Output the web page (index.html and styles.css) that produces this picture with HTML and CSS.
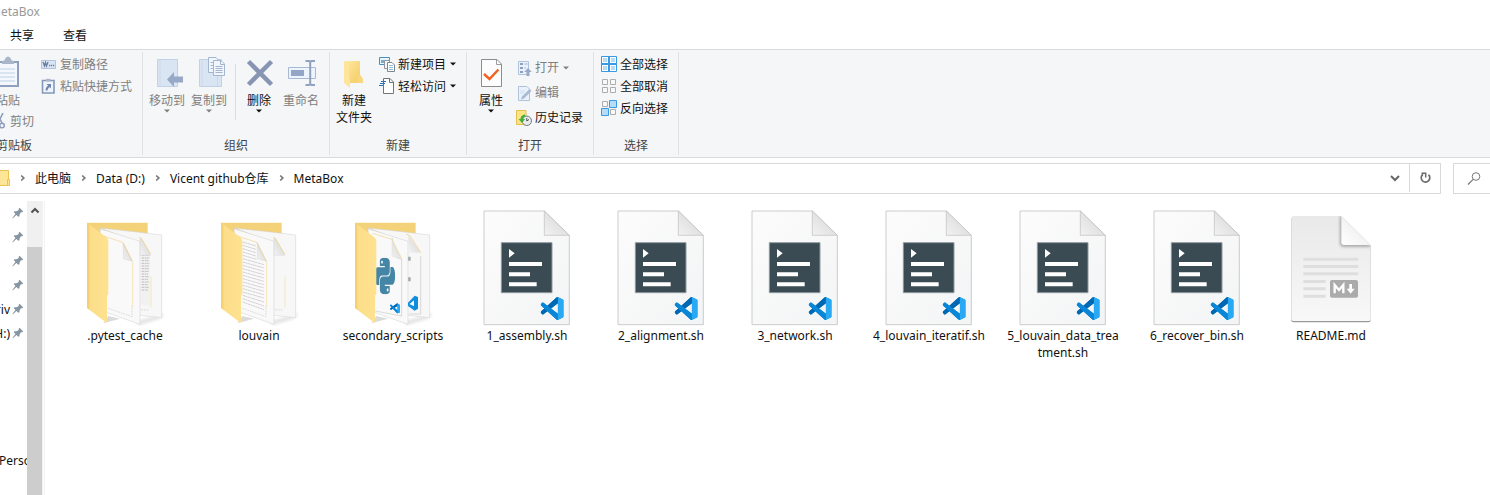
FILE: index.html
```html
<!DOCTYPE html>
<html lang="zh-CN">
<head>
<meta charset="utf-8">
<title>MetaBox</title>
<link rel="stylesheet" href="styles.css">
</head>
<body>
<svg class="defs" aria-hidden="true">
  <defs>
    <linearGradient id="cover" x1="0" y1="0" x2="1" y2="0"><stop offset="0" stop-color="#f8d577"/><stop offset=".12" stop-color="#fbdd8a"/><stop offset="1" stop-color="#ffe28f"/></linearGradient>
    <linearGradient id="paper" x1="0" y1="0" x2="1" y2="1"><stop offset="0" stop-color="#fcfcfc"/><stop offset="1" stop-color="#f3f4f5"/></linearGradient>
    <linearGradient id="curl" x1="0" y1="1" x2="1" y2="0"><stop offset="0" stop-color="#f2f2f2"/><stop offset="1" stop-color="#d2d2d2"/></linearGradient>
    <linearGradient id="mdpaper" x1="0" y1="0" x2="0" y2="1"><stop offset="0" stop-color="#e9e9e9"/><stop offset="1" stop-color="#f8f8f8"/></linearGradient>
    <linearGradient id="mdcurl" x1="0" y1="1" x2="1" y2="0"><stop offset="0" stop-color="#ffffff"/><stop offset=".45" stop-color="#f4f4f4"/><stop offset="1" stop-color="#cccccc"/></linearGradient>
    <linearGradient id="yellow" x1="0" y1="0" x2="1" y2="1"><stop offset="0" stop-color="#ffe9a2"/><stop offset="1" stop-color="#f4cb62"/></linearGradient>
    <filter id="soft" x="-30%" y="-30%" width="160%" height="160%"><feGaussianBlur stdDeviation="5"/></filter>
    <filter id="edge" x="-10%" y="-10%" width="120%" height="120%"><feGaussianBlur stdDeviation="2"/></filter>
    <clipPath id="mdclip"><path d="M70 48H214L302 135V358Q302 363 296 363H70Q64 363 64 357V54Q64 48 70 48Z"/></clipPath>
  </defs>
  <symbol id="vscode" viewBox="0 0 24 24">
    <path fill="#0a86d6" d="M23.15 2.587L18.21.21a1.494 1.494 0 0 0-1.705.29l-9.46 8.63-4.12-3.128a.999.999 0 0 0-1.276.057L.327 7.261A1 1 0 0 0 .326 8.74L3.899 12 .326 15.26a1 1 0 0 0 .001 1.479L1.65 17.94a.999.999 0 0 0 1.276.057l4.12-3.128 9.46 8.63a1.492 1.492 0 0 0 1.704.29l4.942-2.377A1.5 1.5 0 0 0 24 20.06V3.939a1.5 1.5 0 0 0-.85-1.352zm-5.146 14.861L10.826 12l7.178-5.448v10.896z"/>
    <path fill="#0068b2" d="M16.5.5L.33 15.26a1 1 0 0 0 0 1.48l1.32 1.2a1 1 0 0 0 1.28.06L18 6.55V.2Q17.200 0 16.5.5z"/>
    <path fill="#0a86d6" d="M1.65 6.060L.33 7.260a1 1 0 0 0 0 1.480L16.500 23.500Q17.200 24 18 23.800V17.450L2.930 6Q2.200 5.600 1.650 6.060z"/>
    <path fill="#29a9f3" d="M18 .2Q18.100.15 18.210.21L23.150 2.587A1.500 1.500 0 0 1 24 3.939V20.060A1.500 1.500 0 0 1 23.150 21.410L18.210 23.790 18 23.800z"/>
  </symbol>
  <symbol id="python" viewBox="0 0 24 24" preserveAspectRatio="none">
    <path fill="#4585a5" d="M14.25.18l.9.2.73.26.59.3.45.32.34.34.25.34.16.33.1.3.04.26.02.2-.01.13V8.5l-.05.63-.13.55-.21.46-.26.38-.3.31-.33.25-.35.19-.35.14-.33.1-.3.07-.26.04-.21.02H8.77l-.69.05-.59.14-.5.22-.41.27-.33.32-.27.35-.2.36-.15.37-.1.35-.07.32-.04.27-.02.21v3.06H3.17l-.21-.03-.28-.07-.32-.12-.35-.18-.36-.26-.36-.36-.35-.46-.32-.59-.28-.73-.21-.88-.14-1.05-.05-1.23.06-1.22.16-1.04.24-.87.32-.71.36-.57.4-.44.42-.33.42-.24.4-.16.36-.1.32-.05.24-.01h.16l.06.01h8.16v-.83H6.18l-.01-2.75-.02-.37.05-.34.11-.31.17-.28.25-.26.31-.23.38-.2.44-.18.51-.15.58-.12.64-.1.71-.06.77-.04.84-.02 1.27.05zm-6.3 1.98l-.23.33-.08.41.08.41.23.34.33.22.41.09.41-.09.33-.22.23-.34.08-.41-.08-.41-.23-.33-.33-.22-.41-.09-.41.09zm13.09 3.95l.28.06.32.12.35.18.36.27.36.35.35.47.32.59.28.73.21.88.14 1.04.05 1.23-.06 1.23-.16 1.04-.24.86-.32.71-.36.57-.4.45-.42.33-.42.24-.4.16-.36.09-.32.05-.24.02-.16-.01h-8.22v.82h5.84l.01 2.76.02.36-.05.34-.11.31-.17.29-.25.25-.31.24-.38.2-.44.17-.51.15-.58.13-.64.09-.71.07-.77.04-.84.01-1.27-.04-1.07-.14-.9-.2-.73-.25-.59-.3-.45-.33-.34-.34-.25-.34-.16-.33-.1-.3-.04-.25-.02-.2.01-.13v-5.34l.05-.64.13-.54.21-.46.26-.38.3-.32.33-.24.35-.2.35-.14.33-.1.3-.06.26-.04.21-.02.13-.01h5.84l.69-.05.59-.14.5-.21.41-.28.33-.32.27-.35.2-.36.15-.36.1-.35.07-.32.04-.28.02-.21V6.07h2.09l.14.01zm-6.470 14.250l-.23.33-.08.41.08.41.23.33.33.23.41.08.41-.08.33-.23.23-.33.08-.41-.08-.41-.23-.33-.33-.23-.41-.08-.41.08z"/>
  </symbol>
  <symbol id="folder-back" viewBox="45 45 240 315">
    <path d="M200 345L285 322 270 338 205 358Z" fill="#d8d8d8" filter="url(#soft)" opacity=".7"/>
    <path d="M100 352L150 338 115 330Z" fill="#ccc" filter="url(#edge)" opacity=".7"/>
    <path d="M51 50H233V200H51Z" fill="#f3d27a"/>
    <path d="M90 66L200 78 275 87V335L180 325V100Z" fill="#f7f7f7" stroke="#d0d0d0" stroke-width="1.500"/>
  </symbol>
  <symbol id="folder-page" viewBox="45 45 240 315">
    <path d="M90 68L210 106V355L106 318Z" fill="#f9f9f9" stroke="#cfcfcf" stroke-width="1.500"/>
  </symbol>
  <symbol id="folder-cover" viewBox="45 45 240 315">
    <path d="M51 50L109 94Q115 99 115 106V264L111 270V347Q110 352 106 348L51 306Z" fill="url(#cover)"/>
    <path d="M51 50L58 56V311L51 306Z" fill="#f2cb69" opacity=".6"/>
  </symbol>
  <symbol id="folder-curls" viewBox="45 45 240 315">
    <path d="M210 95L214 97 243 148H210Z" fill="url(#curl)" stroke="#cdcdcd"/>
    <path d="M208 95L215 99 242 144" fill="none" stroke="#f1d68e" stroke-width="2.500"/>
    <path d="M160 110L188 166 160 158Z" fill="url(#curl)" stroke="#c9c9c9"/>
    <path d="M104 91L158 109 186 166" fill="none" stroke="#efd38a" stroke-width="2"/>
    <path d="M188 168V302M243 212V304" stroke="#f6e5bd" stroke-width="3"/>
    <path d="M115 307L186 332V300M214 311L238 312" fill="none" stroke="#a8a8a8" stroke-width="1.200" stroke-dasharray="5 3"/>
  </symbol>
  <symbol id="script" viewBox="40 30 264 348">
    <path d="M43 33H224L299 106V374H43Z" fill="url(#paper)" stroke="#c3c3c3" stroke-width="2.500"/>
    <path d="M224 33L299 106H224Z" fill="url(#curl)" stroke="#bdbdbd" stroke-width="2"/>
    <path d="M95 128H247V278H95Z" fill="#3a4b53" stroke="#8f999e" stroke-width="3"/>
    <path d="M118 147L135 160 118 173ZM118 186H217V198H118ZM118 217H181V229H118ZM118 247H201V259H118Z" fill="#fff"/>
    <use href="#vscode" x="213" y="291" width="69" height="69"/>
  </symbol>
  <symbol id="pin" viewBox="0 0 12 12"><path fill="#8694a3" d="M7.500.8L11.300 4.600 10 5.300 9.500 5 7.600 6.900 7.500 9.300 6.400 9.700 4.400 7.900 1 11.200.5 10.800 3.500 7.100 1.800 5.200 2.400 4.200 5 4.200 6.900 2.400 6.700 1.800Z"/></symbol>
  <symbol id="caret" viewBox="0 0 6 4"><path fill="currentColor" d="M0 .5H6L3 3.500Z"/></symbol>
  <symbol id="crumb" viewBox="0 0 8 8"><path fill="none" stroke="#777" stroke-width="1.700" d="M2.200 1.500L4.800 4 2.200 6.500"/></symbol>
</svg>

<div class="window">
  <header class="titlebar">MetaBox</header>
  <nav class="tabs">
    <button class="tab">共享</button>
    <button class="tab">查看</button>
  </nav>

  <div class="ribbon">
    <section class="group group-clipboard">
      <div class="group-body">
        <div class="stack">
          <button class="big muted">
            <svg class="icon-lg" viewBox="0 0 32 32"><path d="M3 5H27V31H3Z" fill="#8da0bf"/><path d="M6 7H25V29H6Z" fill="#f4f8fd"/><path d="M10 5Q13 5 13.500 2Q16 -1 18.500 2Q19 5 22 5V8H10Z" fill="#a9b6ca"/><path d="M8 13H23M8 17H23M8 21H23M8 25H23" stroke="#bfd1e6"/></svg>
            <span>粘贴</span>
          </button>
          <button class="small muted cut">
            <svg class="icon-sm" viewBox="0 0 16 16"><path d="M6 0L11 10M12 0L7 10" stroke="#8d9dbb" stroke-width="1.600"/><circle cx="5.500" cy="12.500" r="2.300" fill="none" stroke="#8d9dbb" stroke-width="1.500"/><circle cx="11" cy="12.500" r="2.300" fill="none" stroke="#8d9dbb" stroke-width="1.500"/></svg>
            <span>剪切</span>
          </button>
        </div>
        <div class="list">
          <button class="small muted">
            <svg class="icon-sm" viewBox="0 0 16 16"><path d="M.5 4.500H14.500V12.500H.5Z" fill="#d9e5f4" stroke="#b3c3db"/><path d="M2 6L3.500 10 4.500 6.500 5.500 10 7 6" fill="none" stroke="#6a7c9f" stroke-width="1.300"/><path d="M8 9.500H9.200M10 9.500H11.200M12 9.500H13.200" stroke="#6a7c9f" stroke-width="1.300"/></svg>
            <span>复制路径</span>
          </button>
          <button class="small muted">
            <svg class="icon-sm" viewBox="0 0 16 16"><path d="M1.500 2.500H13V15H1.500Z" fill="#eef4fb" stroke="#8598b9" stroke-width="1.600"/><path d="M5 .8H9.500V3.500H5Z" fill="#a9b6ca"/><path d="M5.500 6H10V10.500L8.500 9Q6.500 10.500 6.500 12.500H4.500Q4.500 9.500 7 7.500Z" fill="#7288ae"/></svg>
            <span>粘贴快捷方式</span>
          </button>
        </div>
      </div>
      <div class="group-label">剪贴板</div>
    </section>

    <section class="group group-organize">
      <div class="group-body">
        <button class="big muted">
          <svg class="icon-lg" viewBox="0 0 32 32"><path d="M6.500 3.500H26.500V30.500H6.500Z" fill="#dae5f4" stroke="#c3d1e6"/><path d="M9 4V30" stroke="#cbd8ea"/><path d="M16 23.500L23 16V20.500H32V26.500H23V31Z" fill="#98a9c8"/></svg>
          <span>移动到</span><svg class="caret"><use href="#caret"/></svg>
        </button>
        <button class="big muted">
          <svg class="icon-lg" viewBox="0 0 32 32"><path d="M6.500 3.500H28.500V30.500H6.500Z" fill="#dae5f4" stroke="#c3d1e6"/><path d="M9 4V30M24.500 18V30" stroke="#cbd8ea"/><path d="M15.500 1.500H23L26.500 5V16.500H15.500Z" fill="#f1f6fc" stroke="#a4b5d0"/><path d="M20.500 4.500H28L31.500 8V19.500H20.500Z" fill="#f1f6fc" stroke="#a4b5d0"/><path d="M27.500 4.500V8.500H31.500M17.500 6.500H20M17.500 9.500H20M17.500 12.500H20M22.500 10.500H29.500M22.500 12.500H29.500M22.500 14.500H29.500M22.500 16.500H29.500" fill="none" stroke="#a4b5d0"/></svg>
          <span>复制到</span><svg class="caret"><use href="#caret"/></svg>
        </button>
        <span class="divider"></span>
        <button class="big">
          <svg class="icon-lg" viewBox="0 0 32 32"><path d="M5.500 5.500L28.500 28.500M28.500 5.500L5.500 28.500" stroke="#8795b3" stroke-width="4.500"/></svg>
          <span>删除</span><svg class="caret"><use href="#caret"/></svg>
        </button>
        <button class="big muted">
          <svg class="icon-lg" viewBox="0 0 32 32"><path d="M3.500 11.500H30.500V22.500H3.500Z" fill="#eef4fc" stroke="#a8b9d6"/><path d="M6 14H19V20H6Z" fill="#93a6c8"/><path d="M20.500 5H24L25.200 6 26.500 5H30M20.500 29H24L25.200 28 26.500 29H30M25.200 6V28" fill="none" stroke="#8fa1c0" stroke-width="2"/></svg>
          <span>重命名</span>
        </button>
      </div>
      <div class="group-label">组织</div>
    </section>

    <section class="group group-new">
      <div class="group-body">
        <button class="big">
          <svg class="icon-lg" viewBox="0 0 32 32"><path d="M7 5H22V27H7Z" fill="url(#yellow)"/><path d="M21 17L25 23V27H18Z" fill="#f7d77c"/><path d="M6 5L11 9V21L12 25V32L6 27Z" fill="#ffe59c"/></svg>
          <span>新建<br>文件夹</span>
        </button>
        <div class="list">
          <button class="small">
            <svg class="icon-sm" viewBox="0 0 16 16"><path d="M.5 1.500H10.500V8.500H.5Z" fill="#e9f4fb" stroke="#4a8fb9"/><path d="M2 4H6V7H2Z" fill="#74aed0"/><path d="M5.500 4.500H10.500V12.500H5.500Z" fill="#f7f7f7" stroke="#8d979e"/><path d="M8.500 6.500H13L15.500 9V15.500H8.500Z" fill="#fff" stroke="#7d878e"/><path d="M10 9.500H14M10 11.500H14M10 13.500H14" stroke="#8abbd8"/></svg>
            <span>新建项目</span><svg class="caret"><use href="#caret"/></svg>
          </button>
          <button class="small">
            <svg class="icon-sm" viewBox="0 0 16 16"><path d="M4.500.5H11L14.500 4V15.500H4.500Z" fill="#fff" stroke="#757575"/><path d="M10.500.5V4.500H14.500" fill="none" stroke="#757575"/><path d="M2 3.500H7M1 5.500H6M0 7.500H4" stroke="#2671ae"/></svg>
            <span>轻松访问</span><svg class="caret"><use href="#caret"/></svg>
          </button>
        </div>
      </div>
      <div class="group-label">新建</div>
    </section>

    <section class="group group-open">
      <div class="group-body">
        <button class="big">
          <svg class="icon-lg" viewBox="0 0 32 32"><path d="M6.500 3.500H22L26.500 8V30.500H6.500Z" fill="#fdfdfd" stroke="#8c8c8c"/><path d="M21.500 3.500V8.500H26.500" fill="none" stroke="#9c9c9c"/><path d="M9 18L14.500 23 23.500 13.500" fill="none" stroke="#f26322" stroke-width="2.500"/></svg>
          <span>属性</span><svg class="caret"><use href="#caret"/></svg>
        </button>
        <div class="list tall">
          <button class="small muted">
            <svg class="icon-sm" viewBox="0 0 16 16"><path d="M2.500 1.500H12.500V14.500H2.500Z" fill="#e9f1fa" stroke="#b1c2da"/><path d="M4 3H7V5H4ZM4 7H7V9H4ZM4 11H7V13H4Z" fill="#8ba0c2"/><path d="M8.500 4H11.500M8.500 8H10" stroke="#9fb1cd"/><path d="M12 8L15.800 12H13.500V16H10.500V12H8.200Z" fill="#99aac8"/></svg>
            <span>打开</span><svg class="caret"><use href="#caret"/></svg>
          </button>
          <button class="small muted">
            <svg class="icon-sm" viewBox="0 0 16 16"><path d="M2.500 1.500H11L13.500 4V15.500H2.500Z" fill="#e9f1fa" stroke="#b1c2da"/><path d="M4 6H9M4 8H8" stroke="#d0dded"/><path d="M5 14.500L6 11.500 13.500 4 15.500 6 8 13.500Z" fill="#a9bad4"/></svg>
            <span>编辑</span>
          </button>
          <button class="small">
            <svg class="icon-sm" viewBox="0 0 16 16"><path d="M.5.5H10V14.500H.5Z" fill="#ffe385" stroke="#e6c04e"/><circle cx="10.800" cy="10.800" r="4.700" fill="#e9ecee" stroke="#777"/><path d="M10.800 8V11L13 9.500" fill="none" stroke="#555"/><path d="M9 4.500Q4.500 5 4.500 9H2.500L6 13 9 9H7.200Q7.200 7 9 6.500Z" fill="#3fb13d"/></svg>
            <span>历史记录</span>
          </button>
        </div>
      </div>
      <div class="group-label">打开</div>
    </section>

    <section class="group group-select">
      <div class="group-body">
        <div class="list">
          <button class="small">
            <svg class="icon-sm" viewBox="0 0 16 16"><path d="M.5.5H15.500V15.500H.5Z" fill="#fff" stroke="#3c9ae4"/><path d="M2 2H6V6H2ZM10 2H14V6H10ZM2 10H6V14H2ZM10 10H14V14H10Z" fill="#b5ddf9"/><path d="M8 0V16M0 8H16" stroke="#3c9ae4" stroke-width="2"/></svg>
            <span>全部选择</span>
          </button>
          <button class="small">
            <svg class="icon-sm" viewBox="0 0 16 16"><path d="M1.500 1.500H6.500V6.500H1.500ZM9.500 1.500H14.500V6.500H9.500ZM1.500 9.500H6.500V14.500H1.500ZM9.500 9.500H14.500V14.500H9.500Z" fill="#f9f9f9" stroke="#adadad"/></svg>
            <span>全部取消</span>
          </button>
          <button class="small">
            <svg class="icon-sm" viewBox="0 0 16 16"><path d="M1.500 1.500H6.500V6.500H1.500ZM9.500 9.500H14.500V14.500H9.500Z" fill="#f9f9f9" stroke="#adadad"/><path d="M8.500.5H15.500V7.500H8.500ZM.5 8.500H7.500V15.500H.5Z" fill="#b5ddf9" stroke="#3c9ae4"/></svg>
            <span>反向选择</span>
          </button>
        </div>
      </div>
      <div class="group-label">选择</div>
    </section>
  </div>

  <div class="addressbar">
    <nav class="path">
      <svg class="icon-sm" viewBox="0 0 16 16"><path d="M0 .5H14.500V15.500H0Z" fill="#ffe596" stroke="#eac350"/><path d="M13.500 9.500H15.500V15.500H13.500Z" fill="#ffe596" stroke="#eac350"/></svg>
      <svg class="crumb"><use href="#crumb"/></svg><a href="#pc">此电脑</a>
      <svg class="crumb"><use href="#crumb"/></svg><a href="#data">Data (D:)</a>
      <svg class="crumb"><use href="#crumb"/></svg><a href="#repo">Vicent github仓库</a>
      <svg class="crumb"><use href="#crumb"/></svg><a href="#metabox">MetaBox</a>
      <button class="history" aria-label="历史位置"><svg class="icon-sm" viewBox="0 0 16 16"><path d="M4 6L8 10 12 6" fill="none" stroke="#666" stroke-width="2"/></svg></button>
      <button class="refresh" aria-label="刷新"><svg class="icon-sm" viewBox="0 0 16 16"><path d="M11.500 4.700A4.300 4.300 0 1 1 6 4.300" fill="none" stroke="#6b6b6b" stroke-width="1.700"/><path d="M4.500 3.300H8.700V7.500" fill="none" stroke="#6b6b6b" stroke-width="1.500"/></svg></button>
    </nav>
    <label class="search" aria-label="搜索">
      <svg class="icon-sm" viewBox="0 0 16 16"><circle cx="10" cy="5.500" r="3.800" fill="none" stroke="#777"/><path d="M7.200 8.300L2 13.500" stroke="#777" stroke-width="1.200"/></svg>
      <input type="search">
    </label>
  </div>

  <main class="content">
    <aside class="sidebar">
      <div class="pins">
        <div class="pin-row"><svg class="pin"><use href="#pin"/></svg></div>
        <div class="pin-row"><svg class="pin"><use href="#pin"/></svg></div>
        <div class="pin-row"><svg class="pin"><use href="#pin"/></svg></div>
        <div class="pin-row"><svg class="pin"><use href="#pin"/></svg></div>
        <div class="pin-row"><span>riv</span><svg class="pin"><use href="#pin"/></svg></div>
        <div class="pin-row"><span>(H:)</span><svg class="pin"><use href="#pin"/></svg></div>
      </div>
      <div class="tree-row">Personal</div>
    </aside>
    <div class="scrollbar">
      <button class="scroll-up" aria-label="向上滚动"><svg class="icon-sm" viewBox="0 0 16 16"><path d="M4.500 11.500L8 8 11.500 11.500" fill="none" stroke="#505050" stroke-width="2"/></svg></button>
      <div class="thumb"></div>
    </div>

    <div class="files">
      <button class="file">
        <span class="art"><svg class="folder" viewBox="45 45 240 315">
          <use href="#folder-back" x="45" y="45" width="240" height="315"/>
          <path d="M214 150L240 150V300L214 296Z" fill="#f1f1f1"/>
          <path d="M215 148H237M215 156H239M215 164H237M215 172H239M215 180H236M215 188H238M215 196H237M215 204H234M215 212H237M215 220H234M215 228H236M215 236H233M215 244H236M215 252H234" stroke="#a8a8a8" stroke-width="2" stroke-dasharray="7 2 4 1"/>
          <use href="#folder-page" x="45" y="45" width="240" height="315"/>
          <use href="#folder-curls" x="45" y="45" width="240" height="315"/>
          <use href="#folder-cover" x="45" y="45" width="240" height="315"/>
        </svg></span>
        <span class="name">.pytest_cache</span>
      </button>
      <button class="file">
        <span class="art"><svg class="folder" viewBox="45 45 240 315">
          <use href="#folder-back" x="45" y="45" width="240" height="315"/>
          <use href="#folder-page" x="45" y="45" width="240" height="315"/>
          <path d="M116 108L156 120M116 118L156 130M116 128L156 140M116 138L156 150M116 148L158 160M116 158L180 176M116 168L180 186M116 178L180 196M116 188L180 206M116 198L180 216M116 208L180 226M116 218L180 236M116 228L180 246M116 238L180 256M116 248L180 266M116 258L180 276M116 268L180 288M116 278L180 300M116 288L180 311" stroke="#a8a8a8" stroke-width="1.500" stroke-dasharray="9 1 5 1"/>
          <use href="#folder-curls" x="45" y="45" width="240" height="315"/>
          <use href="#folder-cover" x="45" y="45" width="240" height="315"/>
        </svg></span>
        <span class="name">louvain</span>
      </button>
      <button class="file">
        <span class="art"><svg class="folder" viewBox="45 45 240 315">
          <use href="#folder-back" x="45" y="45" width="240" height="315"/>
          <path d="M209 152H218V164H209ZM209 214H218V226H209Z" fill="#a5a9ab"/>
          <path d="M214 324H248V150" fill="none" stroke="#bbb" stroke-width="1.500"/>
          <use href="#folder-page" x="45" y="45" width="240" height="315"/>
          <path d="M210 290L230 269 240 273V308L230 314 210 300V292L228 301V283L210 298Z" fill="#118ddd"/>
          <use href="#python" x="110" y="155" width="61" height="110"/>
          <g transform="translate(156 282) skewY(10)"><use href="#vscode" width="30" height="42"/></g>
          <path d="M112 315L191 330V160L163 150V96" fill="none" stroke="#bbb" stroke-width="1.500"/>
          <path d="M163 101L191 160 163 150Z" fill="url(#curl)"/>
          <path d="M104 82L162 100 191 158" fill="none" stroke="#efd38a" stroke-width="2"/>
          <path d="M211 88L248 140H211Z" fill="url(#curl)"/>
          <path d="M205 84L216 89 248 140" fill="none" stroke="#efd38a" stroke-width="2.500"/>
          <use href="#folder-cover" x="45" y="45" width="240" height="315"/>
        </svg></span>
        <span class="name">secondary_scripts</span>
      </button>
      <button class="file"><span class="art"><svg class="script"><use href="#script"/></svg></span><span class="name">1_assembly.sh</span></button>
      <button class="file"><span class="art"><svg class="script"><use href="#script"/></svg></span><span class="name">2_alignment.sh</span></button>
      <button class="file"><span class="art"><svg class="script"><use href="#script"/></svg></span><span class="name">3_network.sh</span></button>
      <button class="file"><span class="art"><svg class="script"><use href="#script"/></svg></span><span class="name">4_louvain_iteratif.sh</span></button>
      <button class="file"><span class="art"><svg class="script"><use href="#script"/></svg></span><span class="name">5_louvain_data_trea<wbr>tment.sh</span></button>
      <button class="file"><span class="art"><svg class="script"><use href="#script"/></svg></span><span class="name">6_recover_bin.sh</span></button>
      <button class="file">
        <span class="art"><svg class="markdown" viewBox="60 42 246 330">
          <path d="M70 50H214L302 137V360Q302 367 296 367H70Q64 367 64 361V56Z" fill="#9a9a9a" filter="url(#edge)"/>
          <path d="M70 48H214L302 135V358Q302 363 296 363H70Q64 363 64 357V54Q64 48 70 48Z" fill="url(#mdpaper)"/>
          <g clip-path="url(#mdclip)"><path d="M210 48H216L302 134V140H220Q210 140 210 130Z" fill="#a4a4a4" filter="url(#soft)"/></g>
          <path d="M214 48L302 135H222Q214 135 214 127Z" fill="url(#mdcurl)"/>
          <path d="M100 173H265V182H100ZM100 195H265V204H100ZM100 217H265V226H100ZM100 240H167V249H100ZM100 262H167V271H100ZM100 284H167V293H100Z" fill="#dedede"/>
          <rect x="180" y="240" width="84" height="53" rx="6" fill="#ababab"/>
          <path d="M194 280V255L207 270 220 255V280" fill="none" stroke="#fff" stroke-width="7"/><path d="M242 252V270" stroke="#fff" stroke-width="8"/><path d="M230 266H254L242 281Z" fill="#fff"/>
        </svg></span>
        <span class="name">README.md</span>
      </button>
    </div>
  </main>
</div>
</body>
</html>
```
FILE: styles.css
```css
* { box-sizing: border-box; }

body {
  margin: 0;
  overflow: hidden;
  background: #fff;
  color: #111;
  font: 12px/17px "Noto Sans", "Noto Sans CJK SC", sans-serif;
}

button, input {
  margin: 0;
  padding: 0;
  border: 0;
  background: none;
  color: inherit;
  font: inherit;
}

svg { display: block; flex: none; }
.defs { position: absolute; width: 0; height: 0; }

/* The window hangs over the left edge of the screen. */
.window {
  display: flex;
  flex-direction: column;
  min-height: 100vh;
  margin-left: -114px;
}

.titlebar { height: 24px; padding: 3px 0 0 104px; color: #999; }

.tabs {
  display: flex;
  align-items: flex-start;
  gap: 29px;
  height: 26px;
  padding: 3px 0 0 124px;
  border-bottom: 1px solid #dadbdc;
}

/* Ribbon */
.ribbon {
  display: flex;
  height: 108px;
  padding: 2px 0;
  border-bottom: 1px solid #dadbdc;
  background: #f5f6f7;
}
.group {
  display: flex;
  flex-direction: column;
  border-right: 1px solid #e1e2e3;
  white-space: nowrap;
}
.group-body { display: flex; flex: 1; padding-left: 3px; }
.group-label { height: 18px; color: #444; text-align: center; }
.group-clipboard { width: 257px; }
.group-clipboard .group-body { justify-content: flex-end; gap: 3px; padding-right: 10px; }
.group-organize { width: 187px; }
.group-new { width: 137px; }
.group-open { width: 127px; }
.group-select { width: 85px; }

.big {
  display: flex;
  flex-direction: column;
  align-items: center;
  align-self: flex-start;
  width: 42px;
  padding-top: 4px;
}
.big span { margin-top: 4px; }
.icon-lg { width: 32px; height: 32px; }
.icon-sm { width: 16px; height: 16px; }
.caret { width: 6px; height: 4px; }
.muted { color: #808080; }

.stack { display: flex; flex-direction: column; align-items: flex-end; gap: 1px; width: 52px; }
.stack .big { align-self: center; }
.list { display: flex; flex-direction: column; padding: 1px 0 0 4px; }
.small { display: flex; align-items: center; gap: 3px; height: 22px; }
.small .caret { margin-left: 1px; }
.tall { padding-top: 3px; }
.tall .small { height: 25px; }
.divider { width: 1px; height: 56px; margin: 12px 2px 0 5px; background: #dcdddf; }

/* Address bar */
.addressbar { display: flex; gap: 12px; height: 31px; margin-top: 5px; }
.path {
  display: flex;
  flex: 1;
  align-items: center;
  padding: 0 0 1px 107px;
  border: 1px solid #d9d9d9;
  white-space: nowrap;
}
.path a { color: #111; text-decoration: none; }
.crumb { width: 8px; height: 8px; margin: 0 8px 0 9px; }
.history { margin-left: auto; padding: 0 6px; }
.refresh {
  display: flex;
  align-items: center;
  justify-content: center;
  align-self: stretch;
  width: 31px;
  border-left: 1px solid #d9d9d9;
}
.search {
  display: flex;
  align-items: center;
  width: 37px;
  padding-left: 12px;
  border: 1px solid #d9d9d9;
  border-right: 0;
}
.search input { flex: 1; min-width: 0; outline: 0; }

/* Navigation pane and file grid */
.content { display: flex; flex: 1; padding-top: 7px; }
.sidebar { width: 141px; overflow: hidden; }
.pin-row {
  display: flex;
  align-items: center;
  justify-content: flex-end;
  gap: 2px;
  height: 24px;
  padding-right: 3px;
}
.pin { width: 12px; height: 12px; }
.tree-row { margin-top: 104px; padding-left: 113px; height: 24px; line-height: 24px; }
.scrollbar { width: 16px; background: #f0f0f0; display: flex; flex-direction: column; }
.scroll-up { height: 16px; }
.thumb { flex: 1; width: 15px; margin-top: 30px; background: #cdcdcd; }

.files {
  display: flex;
  flex: 1;
  flex-wrap: wrap;
  align-content: flex-start;
  margin-left: 1px;
  padding: 4px 0 0 13px;
  border-left: 1px solid #f2f2f2;
}
.file {
  display: flex;
  flex-direction: column;
  align-items: center;
  align-self: flex-start;
  width: 134px;
}
.art { display: flex; align-items: flex-end; height: 121px; margin-bottom: 1px; }
.name { max-width: 124px; }
.folder { width: 80px; height: 105px; }
.script { width: 88px; height: 116px; }
.markdown { width: 82px; height: 110px; margin-bottom: 2px; }
```
